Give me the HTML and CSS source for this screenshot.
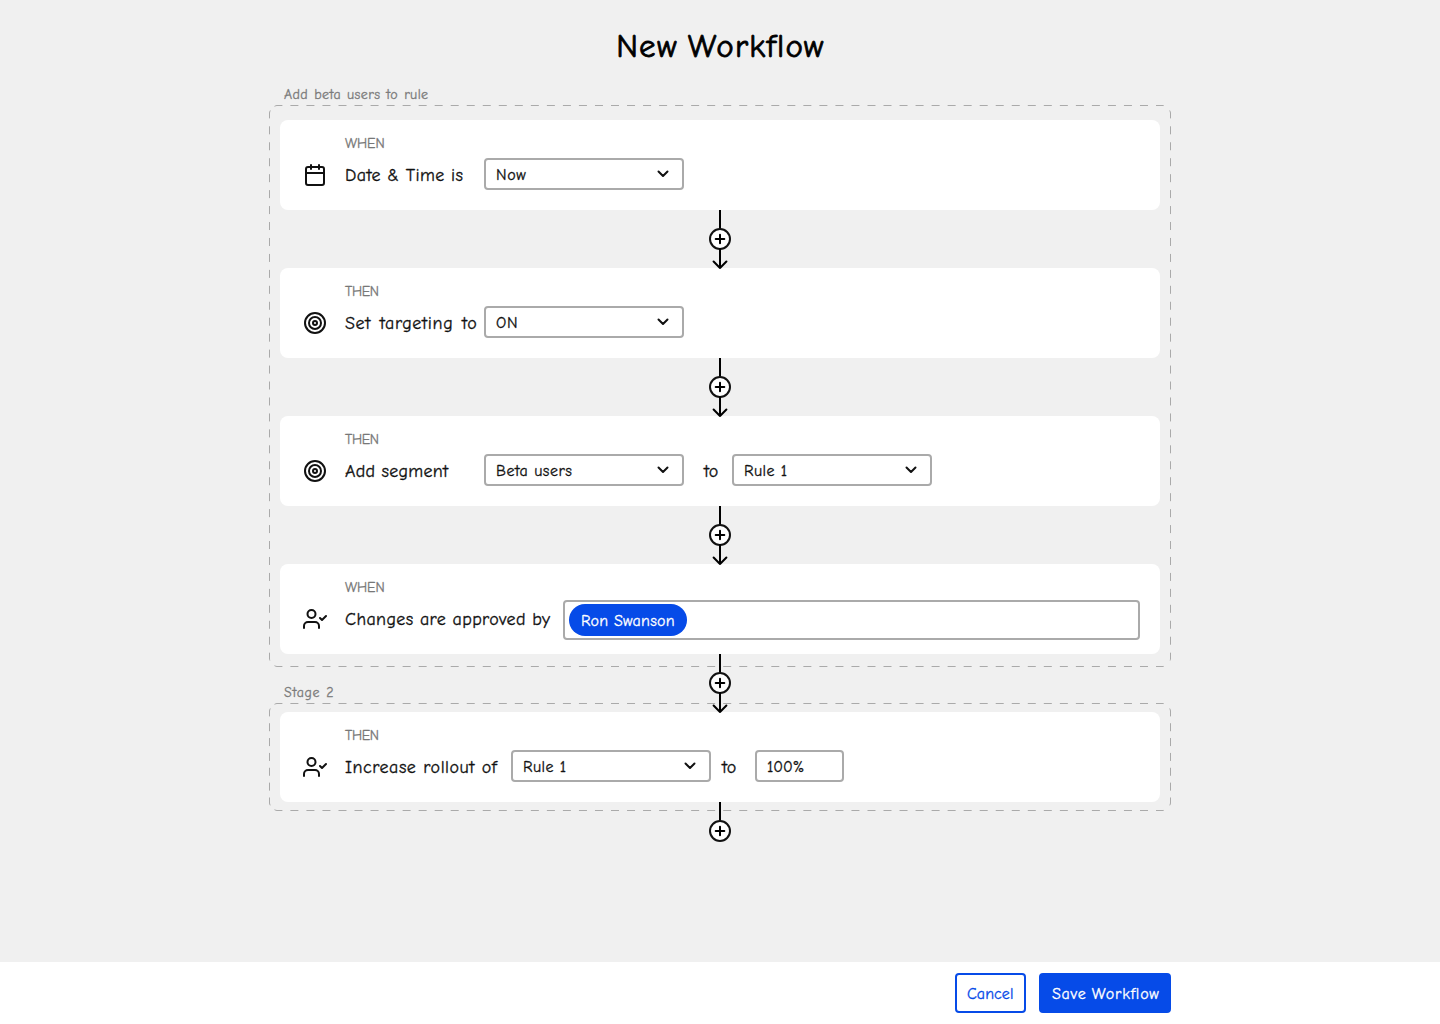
FILE: index.html
```html
<!DOCTYPE html>
<html lang="en">
<head>
<meta charset="utf-8">
<title>New Workflow</title>
<link rel="stylesheet" href="styles.css">
</head>
<body>
<svg class="defs" aria-hidden="true">
  <symbol id="calendar" viewBox="0 0 24 24"><rect x="3" y="4" width="18" height="18" rx="2"/><path d="M16 2v4M8 2v4M3 10h18"/></symbol>
  <symbol id="target" viewBox="0 0 24 24"><circle cx="12" cy="12" r="10"/><circle cx="12" cy="12" r="6"/><circle cx="12" cy="12" r="2"/></symbol>
  <symbol id="user-check" viewBox="0 0 24 24"><path d="M16 21v-2a4 4 0 0 0-4-4H5a4 4 0 0 0-4 4v2"/><circle cx="8.5" cy="7" r="4"/><path d="M17 11l2 2 4-4"/></symbol>
  <symbol id="chevron" viewBox="0 0 12 8"><path d="M1.5 1.5L6 6l4.5-4.5"/></symbol>
  <symbol id="add" viewBox="0 0 24 60"><path class="line" d="M12 0V19"/><circle class="disc" cx="12" cy="29" r="10"/><path class="line" d="M12 24.7v8.6M7.7 29h8.6"/></symbol>
  <symbol id="arrow" viewBox="0 0 24 60"><path class="line" d="M12 39V58M5.6 51.5L12 58L18.4 51.5"/></symbol>
</svg>
<main class="page">
  <h1 class="title"><span class="t-title">New Workflow</span></h1>
  <div class="stage-name first"><span class="t-stage1">Add beta users to rule</span></div>
  <section class="stage stage-one">
    <svg class="frame"><g class="across"><path d="M5.5 1.3Q7 .5 8 .5H894Q895 .5 896.5 1.3"/><path d="M5.5 560.7Q7 561.5 8 561.5H894Q895 561.5 896.5 560.7"/></g><g class="down"><path d="M1.3 5.5Q.5 7 .5 8V554Q.5 555 1.3 556.5"/><path d="M900.7 5.5Q901.5 7 901.5 8V554Q901.5 555 900.7 556.5"/></g></svg>
    <article class="card">
      <div class="kind"><span class="t-when">WHEN</span></div>
      <div class="row">
        <svg class="icon"><use href="#calendar"/></svg>
        <div class="label"><span class="t-date">Date &amp; Time is</span></div>
        <div class="select"><span class="t-now">Now</span><svg class="chev"><use href="#chevron"/></svg></div>
      </div>
      <svg class="connector"><use href="#add"/><use href="#arrow"/></svg>
    </article>
    <article class="card">
      <div class="kind"><span class="t-then">THEN</span></div>
      <div class="row">
        <svg class="icon"><use href="#target"/></svg>
        <div class="label"><span class="t-set">Set targeting to</span></div>
        <div class="select"><span class="t-on">ON</span><svg class="chev"><use href="#chevron"/></svg></div>
      </div>
      <svg class="connector"><use href="#add"/><use href="#arrow"/></svg>
    </article>
    <article class="card">
      <div class="kind"><span class="t-then">THEN</span></div>
      <div class="row">
        <svg class="icon"><use href="#target"/></svg>
        <div class="label"><span class="t-add">Add segment</span></div>
        <div class="select"><span class="t-beta">Beta users</span><svg class="chev"><use href="#chevron"/></svg></div>
        <div class="to"><span class="t-to">to</span></div>
        <div class="select"><span class="t-rule">Rule 1</span><svg class="chev"><use href="#chevron"/></svg></div>
      </div>
      <svg class="connector"><use href="#add"/><use href="#arrow"/></svg>
    </article>
    <article class="card">
      <div class="kind"><span class="t-when">WHEN</span></div>
      <div class="row">
        <svg class="icon"><use href="#user-check"/></svg>
        <div class="label approved"><span class="t-changes">Changes are approved by</span></div>
        <div class="people"><span class="chip"><span class="t-ron">Ron Swanson</span></span></div>
      </div>
      <svg class="connector"><use href="#add"/><use href="#arrow"/></svg>
    </article>
  </section>
  <div class="stage-name second"><span class="t-stage2">Stage 2</span></div>
  <section class="stage stage-two">
    <svg class="frame"><g class="across"><path d="M5.5 1.3Q7 .5 8 .5H894Q895 .5 896.5 1.3"/><path d="M5.5 106.7Q7 107.5 8 107.5H894Q895 107.5 896.5 106.7"/></g><g class="down"><path d="M1.3 5.5Q.5 7 .5 8V100Q.5 101 1.3 102.5"/><path d="M900.7 5.5Q901.5 7 901.5 8V100Q901.5 101 900.7 102.5"/></g></svg>
    <article class="card">
      <div class="kind"><span class="t-then">THEN</span></div>
      <div class="row">
        <svg class="icon"><use href="#user-check"/></svg>
        <div class="label rollout"><span class="t-increase">Increase rollout of</span></div>
        <div class="select"><span class="t-rule">Rule 1</span><svg class="chev"><use href="#chevron"/></svg></div>
        <div class="to near"><span class="t-to">to</span></div>
        <div class="select percent"><span class="t-percent">100%</span></div>
      </div>
      <svg class="connector"><use href="#add"/></svg>
    </article>
  </section>
</main>
<footer class="footer">
  <button class="button"><span class="t-cancel">Cancel</span></button>
  <button class="button primary"><span class="t-save">Save Workflow</span></button>
</footer>
</body>
</html>
```
FILE: styles.css
```css
* { box-sizing: border-box; }
body { margin: 0; height: 1024px; display: flex; flex-direction: column; background: #f0f0f0; color: #111; font-family: "Comic Neue", Lato, sans-serif; font-weight: 500; overflow: hidden; }
span { white-space: nowrap; -webkit-text-stroke: .3px currentColor; font-feature-settings: "liga" 1; }
svg { display: block; fill: none; stroke: #111; stroke-width: 2; stroke-linecap: round; stroke-linejoin: round; overflow: visible; }
.defs { position: absolute; width: 0; height: 0; }
.page { width: 902px; height: 962px; margin: 0 auto; flex: none; }
.title { margin: 0; padding-top: 26px; height: 84px; font-size: 33px; line-height: 40px; font-weight: 500; text-align: center; color: #000; }
.t-title { letter-spacing: 1.25px; word-spacing: -2.5px; -webkit-text-stroke-width: .8px; margin-right: -1px; }
.stage-name { padding: 1px 0 0 15px; font-size: 14px; line-height: 20px; color: #7b7b7b; }
.t-stage1 { letter-spacing: .4px; word-spacing: .9px; }
.t-stage2 { letter-spacing: .65px; word-spacing: .6px; }
.t-when { letter-spacing: -.1px; }
.t-then { letter-spacing: -.4px; }
.t-date { letter-spacing: .4px; }
.t-set { letter-spacing: .65px; word-spacing: 2px; }
.t-add { letter-spacing: .25px; }
.t-changes { letter-spacing: .37px; word-spacing: 0; }
.t-increase { letter-spacing: .52px; word-spacing: .3px; }
.t-now, .t-on { letter-spacing: .7px; }
.t-beta { letter-spacing: .5px; }
.t-rule { letter-spacing: .45px; }
.t-ron { letter-spacing: .25px; }
.t-percent { letter-spacing: 0; }
.first { height: 21px; }
.second { height: 36px; padding-top: 16px; }
.stage { position: relative; display: flex; flex-direction: column; gap: 58px; padding: 0 11px; }
.stage-one { height: 562px; padding-top: 15px; }
.stage-two { height: 108px; padding-top: 9px; }
.frame { position: absolute; inset: 0; width: 902px; height: 100%; stroke: #aaa; stroke-width: 1; stroke-linecap: butt; }
.across { stroke-dasharray: 8 8.03; }
.down { stroke-dasharray: 8 7.95; }
.stage-two .down { stroke-dasharray: 8 6.85; }
.card { position: relative; height: 90px; padding: 14px 20px 0 23px; background: #fff; border-radius: 8px; }
.kind { height: 20px; padding-left: 42px; font-size: 14px; line-height: 20px; color: #777; font-weight: 400; }
.row { display: flex; align-items: center; height: 40px; }
.icon { width: 24px; height: 24px; margin: 2px 18px 0 0; }
.label { width: 139px; font-size: 18px; line-height: 24px; padding-top: 4px; }
.approved { width: 218px; }
.rollout { width: 166px; }
.select { display: flex; align-items: center; justify-content: space-between; width: 200px; height: 32px; padding: 2px 13px 0 10px; border: 2px solid #aaa; border-radius: 4px; font-size: 16px; line-height: 24px; }
.chev { width: 12px; height: 8px; margin-top: -2px; }
.to { width: 48px; padding: 4px 0 0 20px; font-size: 18px; line-height: 24px; }
.near { width: 44px; padding-left: 11px; }
.percent { width: 89px; }
.people { flex: 1; height: 40px; margin-top: 4px; padding: 2px 4px; border: 2px solid #aaa; border-radius: 4px; }
.chip { display: flex; align-items: center; width: 118px; height: 32px; padding: 1px 0 0 12px; background: #064be8; color: #fff; border-radius: 16px; font-size: 16px; }
.connector { position: absolute; top: 100%; left: 428px; width: 24px; height: 60px; z-index: 2; }
.line { stroke: #000; }
.disc { fill: #fff; }
.footer { flex: none; display: flex; justify-content: flex-end; gap: 13px; height: 62px; padding: 11px 269px 0 0; background: #fff; }
.button { display: flex; align-items: center; width: 71px; height: 40px; padding: 2px 0 0 10px; border: 2px solid #064be8; border-radius: 4px; background: #fff; color: #064be8; font: inherit; font-size: 16px; }
.t-cancel { letter-spacing: .05px; }
.t-save { letter-spacing: .75px; word-spacing: -.7px; }
.primary { width: 132px; padding-left: 11px; background: #064be8; color: #fff; }
```
